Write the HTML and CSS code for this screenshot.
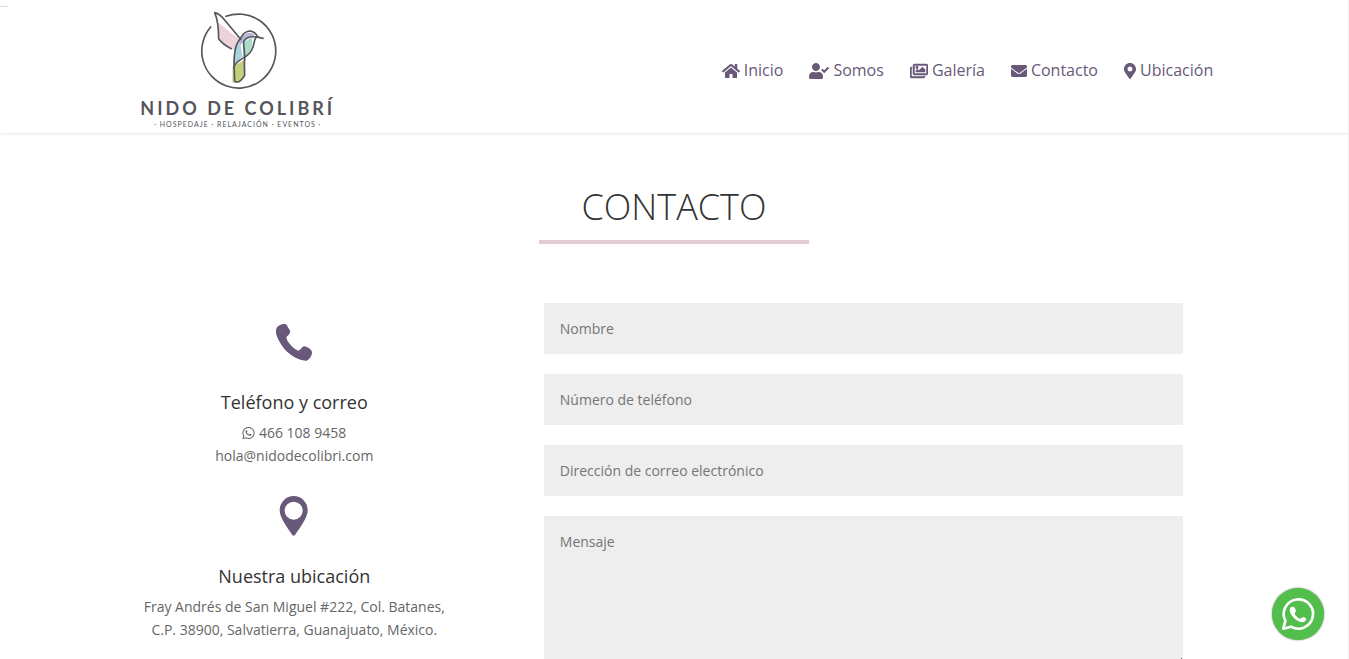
FILE: index.html
```html
<!DOCTYPE html>
<html lang="es">
<head>
    <meta charset="UTF-8">
    <meta name="viewport" content="width=device-width, initial-scale=1.0">
    <title>Contacto - Nido de Colibrí</title>
    <link rel="stylesheet" href="styles.css">
</head>
<body>
<header id="header">
    <div class="container header-inner">
        <a href="#" class="logo">
            <svg class="logo-mark" viewBox="-6 0 300 270" aria-hidden="true">
                <path fill="#edd3d9" d="M85 50 L148 100 L140 133 L118 127 L91 103 L84 78Z"/>
                <path fill="#b9b3d8" d="M148 102 C160 80 185 75 194 88 C178 96 158 104 146 126Z"/>
                <path fill="#a9dcc4" d="M163 108 L186 94 C190 125 178 148 157 158Z"/>
                <path fill="#a8d3e0" d="M134 130 L151 108 L157 150 L146 166 L129 184Z"/>
                <path fill="#c6cf7c" d="M128 186 C140 172 155 168 166 158 L164 210 L146 229 L127 230Z"/>
                <g fill="none" stroke="#56555c" stroke-width="5" stroke-linecap="round" stroke-linejoin="round">
                    <path d="M108 31 A111 111 0 1 1 62 63"/>
                    <path d="M124 128 C112 122 96 112 86 98 C86 70 83 40 74 20 C86 22 94 30 102 40 L152 100"/>
                    <path d="M134 225 C132 175 127 125 151 98 C162 74 188 65 202 91 C208 95 214 96 219 97 C195 91 174 88 162 105 C157 120 168 140 163 168 L164 208 C158 218 152 227 143 228 C138 228 134 227 134 225"/>
                    <path d="M202 91 C190 97 195 116 185 132 C172 160 145 153 131 184"/>
                </g>
            </svg>
            <span class="logo-name">NIDO DE COLIBRÍ</span>
            <span class="logo-tag">· HOSPEDAJE · RELAJACIÓN · EVENTOS ·</span>
        </a>
        <nav class="menu">
            <a href="#">
                <svg class="icon" width="18" height="16" viewBox="0 0 576 512"><path d="M280.370 148.260L96 300.110V464a16 16 0 0 0 16 16l112.060-.290a16 16 0 0 0 15.920-16V368a16 16 0 0 1 16-16h64a16 16 0 0 1 16 16v95.640a16 16 0 0 0 16 16.050L464 480a16 16 0 0 0 16-16V300L295.670 148.260a12.190 12.190 0 0 0-15.300 0zM571.600 251.470L488 182.560V44.050a12 12 0 0 0-12-12h-56a12 12 0 0 0-12 12v72.610L318.470 43a48 48 0 0 0-61 0L4.340 251.470a12 12 0 0 0-1.600 16.900l25.500 31A12 12 0 0 0 45.150 301l235.220-193.740a12.190 12.190 0 0 1 15.300 0L530.900 301a12 12 0 0 0 16.900-1.600l25.500-31a12 12 0 0 0-1.700-16.930z"/></svg>
                Inicio
            </a>
            <a href="#">
                <svg class="icon" width="20" height="16" viewBox="0 0 640 512"><path d="M224 256c70.700 0 128-57.300 128-128S294.700 0 224 0 96 57.300 96 128s57.300 128 128 128zm89.600 32h-16.700c-22.200 10.200-46.900 16-72.900 16s-50.600-5.800-72.900-16h-16.700C60.200 288 0 348.200 0 422.400V464c0 26.500 21.500 48 48 48h352c26.500 0 48-21.500 48-48v-41.600c0-74.200-60.200-134.400-134.400-134.400zm323-128.400l-27.800-28.100c-4.600-4.700-12.100-4.700-16.800-.1l-104.800 104-45.500-45.800c-4.600-4.700-12.100-4.700-16.800-.1l-28.100 27.900c-4.700 4.600-4.700 12.100-.1 16.800l81.700 82.300c4.600 4.700 12.100 4.700 16.800.1l141.300-140.200c4.600-4.700 4.700-12.200.1-16.800z"/></svg>
                Somos
            </a>
            <a href="#">
                <svg class="icon icon-bold" width="18" height="16" viewBox="0 0 576 512"><path d="M480 416v16c0 26.510-21.490 48-48 48H48c-26.510 0-48-21.490-48-48V176c0-26.510 21.490-48 48-48h16v48H54a6 6 0 0 0-6 6v244a6 6 0 0 0 6 6h372a6 6 0 0 0 6-6v-10h48zm42-336H150a6 6 0 0 0-6 6v244a6 6 0 0 0 6 6h372a6 6 0 0 0 6-6V86a6 6 0 0 0-6-6zm6-48c26.510 0 48 21.490 48 48v256c0 26.510-21.490 48-48 48H144c-26.510 0-48-21.490-48-48V80c0-26.510 21.490-48 48-48h384zM264 144c0 22.091-17.909 40-40 40s-40-17.909-40-40 17.909-40 40-40 40 17.909 40 40zm-72 96l39.515-39.515c4.686-4.686 12.284-4.686 16.971 0L288 240l103.515-103.515c4.686-4.686 12.284-4.686 16.971 0L480 208v80H192v-48z"/></svg>
                Galería
            </a>
            <a href="#">
                <svg class="icon" width="16" height="16" viewBox="0 0 512 512"><path d="M502.300 190.800c3.900-3.100 9.700-.2 9.700 4.700V400c0 26.500-21.500 48-48 48H48c-26.500 0-48-21.500-48-48V195.600c0-5 5.700-7.800 9.700-4.700 22.400 17.400 52.100 39.500 154.100 113.600 21.100 15.400 56.700 47.800 92.200 47.600 35.700.3 72-32.800 92.300-47.600 102-74.100 131.600-96.300 154-113.700zM256 320c23.200.4 56.600-29.200 73.400-41.400 132.700-96.300 142.800-104.700 173.400-128.700 5.800-4.500 9.200-11.500 9.200-18.900v-19c0-26.500-21.500-48-48-48H48c-26.500 0-48 21.500-48 48v19c0 7.400 3.400 14.300 9.200 18.900 30.600 23.900 40.700 32.400 173.400 128.700 16.800 12.200 50.200 41.800 73.400 41.400z"/></svg>
                Contacto
            </a>
            <a href="#">
                <svg class="icon" width="12" height="16" viewBox="0 0 384 512"><path d="M172.268 501.670C26.970 291.031 0 269.413 0 192 0 85.961 85.961 0 192 0s192 85.961 192 192c0 77.413-26.970 99.031-172.268 309.670-9.535 13.774-29.930 13.773-39.464 0zM192 272c44.183 0 80-35.817 80-80s-35.817-80-80-80-80 35.817-80 80 35.817 80 80 80z"/></svg>
                Ubicación
            </a>
        </nav>
    </div>
</header>

<main class="container">
    <h1>CONTACTO</h1>
    <div class="row">
        <section class="info">
            <div class="blurb">
                <svg class="blurb-icon" viewBox="223 36 120 120" aria-hidden="true"><path d="M232 52 C238 43 256 38 261 45 L271 62 C274 71 263 75 260 83 C261 94 284 119 296 122 C303 121 306 110 314 109 C322 110 337 119 337 127 C337 136 330 149 321 152 C300 154 266 136 246 106 C232 84 224 65 232 52Z"/></svg>
                <h4>Teléfono y correo</h4>
                <p>
                    <a href="#"><svg class="icon" width="13" height="14" viewBox="0 0 448 512"><path d="M380.900 97.100C339 55.100 283.200 32 223.900 32c-122.400 0-222 99.600-222 222 0 39.100 10.200 77.300 29.600 111L0 480l117.700-30.900c32.400 17.700 68.900 27 106.100 27h.1c122.300 0 224.100-99.600 224.100-222 0-59.300-25.200-115-67.100-157zm-157 341.600c-33.200 0-65.700-8.900-94-25.700l-6.700-4-69.800 18.300L72 359.200l-4.400-7c-18.500-29.400-28.200-63.300-28.200-98.200 0-101.700 82.800-184.500 184.600-184.500 49.300 0 95.600 19.200 130.400 54.100 34.800 34.900 56.200 81.200 56.100 130.500 0 101.800-84.900 184.600-186.600 184.600zm101.200-138.200c-5.500-2.800-32.800-16.200-37.900-18-5.100-1.900-8.800-2.800-12.500 2.800-3.700 5.600-14.300 18-17.600 21.800-3.200 3.700-6.500 4.200-12 1.400-32.600-16.300-54-29.100-75.500-66-5.700-9.800 5.700-9.100 16.300-30.300 1.800-3.700.9-6.900-.5-9.700-1.400-2.800-12.500-30.100-17.100-41.200-4.500-10.800-9.100-9.300-12.500-9.500-3.200-.2-6.900-.2-10.600-.2-3.700 0-9.700 1.400-14.800 6.900-5.100 5.600-19.400 19-19.400 46.300 0 27.300 19.900 53.700 22.600 57.400 2.800 3.700 39.100 59.700 94.800 83.800 35.200 15.200 49 16.500 66.600 13.900 10.700-1.600 32.800-13.400 37.400-26.400 4.600-13 4.600-24.100 3.200-26.400-1.300-2.500-5-3.900-10.500-6.600z"/></svg> 466 108 9458</a><br>
                    hola@nidodecolibri.com
                </p>
            </div>
            <div class="blurb">
                <svg class="blurb-icon" viewBox="433 48 120 120" aria-hidden="true"><path fill-rule="evenodd" d="M492 48 A42 43 0 0 0 450 91 C450 115 475 145 488 165 Q492 170 496 165 C509 145 534 115 534 91 A42 43 0 0 0 492 48Z M492 65 A27 27 0 1 1 492 119 A27 27 0 1 1 492 65Z"/></svg>
                <h4>Nuestra ubicación</h4>
                <p>Fray Andrés de San Miguel #222, Col. Batanes, C.P. 38900, Salvatierra, Guanajuato, México.</p>
            </div>
        </section>
        <form class="contact-form">
            <input type="text" placeholder="Nombre" aria-label="Nombre">
            <input type="tel" placeholder="Número de teléfono" aria-label="Número de teléfono">
            <input type="email" placeholder="Dirección de correo electrónico" aria-label="Dirección de correo electrónico">
            <textarea placeholder="Mensaje" aria-label="Mensaje"></textarea>
        </form>
    </div>
</main>

<a href="#" class="whatsapp" aria-label="WhatsApp">
    <svg viewBox="336 54 156 156">
        <path fill="none" stroke="#fff" stroke-width="8" stroke-linejoin="round" d="M370 176 L376 152 A44 44 0 1 1 393 170Z"/>
        <path fill="#fff" d="M391 113 C394 109 402 109 404 113 L408 122 C408 127 403 127 404 131 C407 138 415 145 421 146 C425 145 427 140 431 141 L438 145 C440 151 434 156 428 157 C410 157 389 135 389 120Z"/>
    </svg>
</a>
</body>
</html>
```

FILE: styles.css
```css
* {
    box-sizing: border-box;
}

body {
    margin: 0;
    border-right: 1px solid #f0f0f0;
    background-color: #fff;
    color: #666;
    font-family: 'Open Sans', Helvetica, Arial, sans-serif;
    font-size: 14px;
    line-height: 23px;
}

a {
    color: inherit;
    text-decoration: none;
}

.container {
    width: 80%;
    margin: 0 auto;
}

/* header */
#header {
    position: relative;
    background-color: #fff;
    box-shadow: 0 1px 3px rgba(0, 0, 0, 0.1);
}

#header::before {
    content: "";
    position: absolute;
    top: 6px;
    left: 0;
    width: 8px;
    height: 1px;
    background-color: #ddd;
}

.header-inner {
    display: flex;
    align-items: center;
    justify-content: space-between;
}

.logo {
    display: flex;
    flex-direction: column;
    align-items: center;
    width: 206px;
    padding: 6px 0 5px;
    color: #56555c;
    font-family: Lato, 'Open Sans', sans-serif;
    white-space: nowrap;
}

.logo-mark {
    width: 100px;
    height: 90px;
}

.logo-name {
    font-size: 18px;
    font-weight: bold;
    line-height: 24px;
    letter-spacing: 3px;
}

.logo-tag {
    font-size: 7px;
    line-height: 8px;
    letter-spacing: 1px;
}

.menu {
    display: flex;
    gap: 26px;
    padding-top: 8px;
    color: #685879;
    font-size: 16px;
}

.menu a {
    display: flex;
    align-items: center;
    gap: 4px;
}

.icon {
    fill: currentColor;
    vertical-align: -2px;
}

.icon-bold {
    stroke: currentColor;
    stroke-width: 16px;
}

/* title */
h1 {
    width: 25%;
    margin: 50px auto 59px;
    padding-bottom: 9px;
    border-bottom: 4px solid #e2cbd2;
    color: #333;
    font-size: 36px;
    font-weight: 300;
    line-height: 48px;
    text-align: center;
}

/* contact info + form */
.row {
    display: grid;
    grid-template-columns: 319px 1fr;
    gap: 60px;
}

.info {
    padding-top: 19px;
    text-align: center;
}

.blurb {
    margin-bottom: 29px;
}

.blurb-icon {
    display: block;
    width: 40px;
    height: 40px;
    margin: 0 auto 31px;
    fill: #685879;
}

.blurb h4 {
    margin: 0 0 10px;
    color: #333;
    font-size: 18px;
    font-weight: 400;
    line-height: 18px;
}

.blurb p {
    margin: 0;
}

.contact-form {
    display: flex;
    flex-direction: column;
    gap: 20px;
    padding: 0 30px;
}

.contact-form input,
.contact-form textarea {
    display: block;
    width: 100%;
    height: 51px;
    padding: 16px;
    border: 0;
    border-radius: 0;
    background-color: #eee;
    color: #666;
    font-family: inherit;
    font-size: 14px;
}

.contact-form textarea {
    height: 150px;
    resize: vertical;
}

.contact-form ::placeholder {
    color: #757575;
}

/* floating button */
.whatsapp {
    position: fixed;
    right: 25px;
    bottom: 19px;
    width: 52px;
    height: 52px;
    border-radius: 50%;
    background-color: #52be4b;
    box-shadow: 0 0 2px rgba(0, 0, 0, 0.5);
}

.whatsapp svg {
    display: block;
}
```
